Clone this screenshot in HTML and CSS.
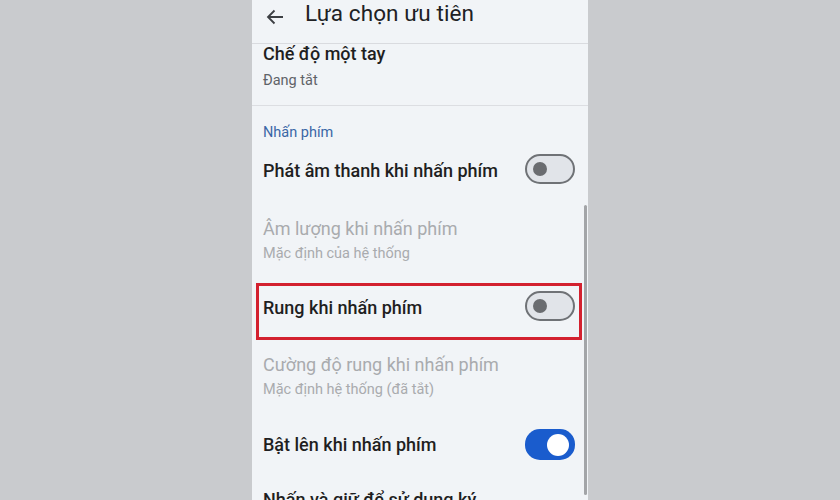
FILE: index.html
```html
<!DOCTYPE html>
<html lang="vi">
<head>
<meta charset="utf-8">
<link rel="stylesheet" href="styles.css">
</head>
<body>
<div class="stage">
  <div class="phone">
    <header class="topbar">
      <svg class="back" width="18" height="16" viewBox="0 0 18 16"><path d="M17 8H2M8.5 1.5L2 8l6.5 6.5" fill="none" stroke="#3c3f43" stroke-width="1.8"/></svg>
      <span class="title">Lựa chọn ưu tiên</span>
    </header>
    <div class="row-top">
      <div class="t">Chế độ một tay</div>
      <div class="s">Đang tắt</div>
    </div>
    <div class="list">
      <div class="label">Nhấn phím</div>
      <div class="switch-row r1">
        <span class="t">Phát âm thanh khi nhấn phím</span>
        <span class="toggle off"><i></i></span>
      </div>
      <div class="row disabled r2">
        <div class="t">Âm lượng khi nhấn phím</div>
        <div class="s">Mặc định của hệ thống</div>
      </div>
      <div class="highlight">
        <div class="switch-row">
          <span class="t">Rung khi nhấn phím</span>
          <span class="toggle off"><i></i></span>
        </div>
      </div>
      <div class="row disabled r3">
        <div class="t">Cường độ rung khi nhấn phím</div>
        <div class="s">Mặc định hệ thống (đã tắt)</div>
      </div>
      <div class="switch-row r4">
        <span class="t">Bật lên khi nhấn phím</span>
        <span class="toggle on"><i></i></span>
      </div>
      <div class="row r5">
        <div class="t">Nhấn và giữ để sử dụng ký</div>
      </div>
    </div>
    <div class="scrollbar"></div>
  </div>
</div>
</body>
</html>
```

FILE: styles.css
```css
* { box-sizing: border-box; margin: 0; padding: 0; }
html, body { width: 840px; height: 500px; overflow: hidden; }
body { background: #c9cbce; font-family: Roboto, "Noto Sans", sans-serif; }
.stage { display: flex; justify-content: center; height: 500px; }
.phone {
  position: relative;
  width: 336px;
  height: 500px;
  background: #f1f4f7;
  overflow: hidden;
}
.topbar {
  height: 44px;
  border-bottom: 1px solid #d9dbdf;
  display: flex;
  align-items: flex-start;
  padding: 5px 0 0 14px;
}
.back { margin-top: 4px; }
.title {
  margin-left: 21px;
  font-size: 22.5px;
  line-height: 17px;
  color: #202124;
  letter-spacing: 0.1px;
}
.t { font-size: 18px; line-height: 20px; color: #1f1f1f; font-weight: 500; }
.s { font-size: 14.5px; line-height: 20px; color: #5f6368; margin-top: 5px; }
.row-top {
  height: 62px;
  padding-left: 11px;
  border-bottom: 1px solid #dcdee2;
}
.row-top .s { margin-top: 7px; }
.list { display: flex; flex-direction: column; }
.label {
  margin-top: 17px;
  padding-left: 11px;
  font-size: 14.5px;
  line-height: 20px;
  color: #3a67a6;
}
.switch-row {
  display: flex;
  align-items: center;
  justify-content: space-between;
  padding: 0 13px 0 11px;
  height: 30px;
}
.switch-row .t { margin-top: 4px; }
.row { padding-left: 11px; }
.r1 { margin-top: 11px; }
.r2 { margin-top: 35px; }
.disabled .t { color: #a9abae; font-weight: 400; }
.disabled .s { color: #a9abae; }
.highlight {
  margin: 19px 6px 0 4px;
  height: 57px;
  border: 3px solid #d3212f;
  padding-top: 5px;
}
.highlight .switch-row { padding: 0 4px; }
.r3 { margin-top: 15px; }
.r4 { margin-top: 29px; height: 31px; }
.switch-row.r4 .t { margin-top: 0; }
.r5 { margin-top: 30px; }
.toggle {
  position: relative;
  width: 50px;
  height: 30px;
  border-radius: 15px;
  flex: none;
}
.toggle i { position: absolute; border-radius: 50%; }
.toggle.off { background: #e1e4e9; border: 2px solid #6f7276; }
.toggle.off i { width: 14px; height: 14px; left: 6px; top: 6px; background: #6a6c70; }
.toggle.on { background: #1a5ccd; height: 31px; }
.toggle.on i { width: 22px; height: 22px; right: 6px; top: 4.5px; background: #ffffff; }
.scrollbar {
  position: absolute;
  left: 332px;
  top: 205px;
  width: 3px;
  height: 290px;
  background: #a3a5a8;
  border-radius: 2px;
}
```
